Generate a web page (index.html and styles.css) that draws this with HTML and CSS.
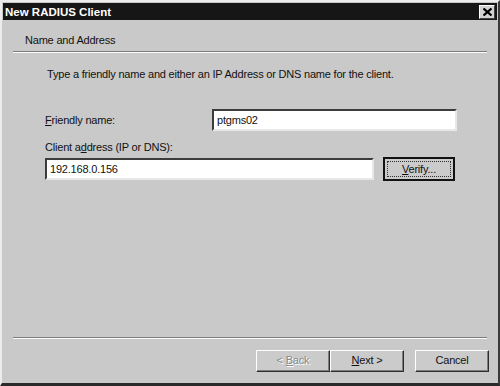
FILE: index.html
```html
<!DOCTYPE html>
<html lang="en">
<head>
  <meta charset="UTF-8">
  <title>New RADIUS Client</title>
  <link rel="stylesheet" href="styles.css">
</head>
<body>
  <div class="window">
    <div class="titlebar">
      <span class="title">New RADIUS Client</span>
      <span class="close">
        <svg width="9" height="8" viewBox="0 0 9 8">
          <path d="M0.5 0.5 L8.5 7.5 M8.5 0.5 L0.5 7.5" stroke="#000" stroke-width="2.2"/>
        </svg>
      </span>
    </div>
    <div class="header">Name and Address</div>
    <div class="sep"></div>

    <div class="content">
      <p class="intro">Type a friendly name and either an IP Address or DNS name for the client.</p>
      <div class="row">
        <label class="label"><u>F</u>riendly name:</label>
        <div class="field wide">ptgms02</div>
      </div>
      <label class="label block">Client a<u>d</u>dress (IP or DNS):</label>
      <div class="row tight">
        <div class="field addr">192.168.0.156</div>
        <div class="btn default"><span class="focus"><u>V</u>erify...</span></div>
      </div>
    </div>

    <div class="sep"></div>
    <div class="footer">
      <div class="btn disabled">&lt; <u>B</u>ack</div>
      <div class="btn"><u>N</u>ext &gt;</div>
      <div class="btn cancel">Cancel</div>
    </div>
  </div>
</body>
</html>
```

FILE: styles.css
```css
/*
 *  Classic dialog look.
 */
html, body{
  margin: 0;
  padding: 0;
  background: #c9c9c9;
}
body{
  font-family: "Liberation Sans", Arial, sans-serif;
  font-size: 11px;
  letter-spacing: -0.2px;
  color: #111;
}
.window{
  box-sizing: border-box;
  width: 500px;
  height: 386px;
  padding: 1px;
  border-style: solid;
  border-width: 2px 2px 3px 2px;
  border-color: #ececec #3a3a3a #2a2a2a #ececec;
  background: #c9c9c9;
  display: flex;
  flex-direction: column;
}
.titlebar{
  height: 17px;
  background: #161616;
  display: flex;
  align-items: center;
  justify-content: space-between;
}
.title{
  color: #fff;
  font-weight: bold;
  font-size: 11.5px;
  letter-spacing: 0;
  padding-left: 2px;
}
.close{
  box-sizing: border-box;
  width: 16px;
  height: 14px;
  margin-right: 2px;
  background: #d2d2d2;
  border: 1px solid;
  border-color: #fff #404040 #404040 #fff;
  display: flex;
  align-items: center;
  justify-content: center;
}

/*
 *  Sections.
 */
.header{
  padding: 14px 0 4px 22px;
  line-height: 13px;
}
.sep{
  margin: 0 10px;
  border-top: 1px solid #7c7c7c;
  border-bottom: 1px solid #fbfbfb;
}
.content{
  flex: 1;
  padding-left: 42px;
}
.intro{
  margin: 15px 0 0 2px;
  line-height: 13px;
}
.row{
  display: flex;
  align-items: center;
  margin-top: 28px;
}
.row.tight{
  margin-top: 3px;
}
.label{
  width: 167px;
  line-height: 13px;
}
.label.block{
  display: block;
  width: auto;
  margin-top: 10px;
}
.field{
  box-sizing: border-box;
  height: 22px;
  line-height: 18px;
  padding-left: 3px;
  background: #fff;
  border: 2px solid;
  border-color: #3c3c3c #e8e8e8 #e8e8e8 #3c3c3c;
}
.field.wide{
  width: 245px;
}
.field.addr{
  width: 329px;
  margin-right: 9px;
}

/*
 *  Buttons.
 */
.btn{
  box-sizing: border-box;
  width: 74px;
  height: 22px;
  line-height: 18px;
  text-align: center;
  background: #cbcbcb;
  border: 1px solid;
  border-color: #fff #2e2e2e #2e2e2e #fff;
  box-shadow: inset -1px -1px 0 #7e7e7e;
}
.btn.default{
  width: 72px;
  height: 24px;
  border: 2px solid #111;
  box-shadow: none;
  padding: 2px;
}
.btn.default .focus{
  display: block;
  height: 16px;
  line-height: 14px;
  border: 1px dotted #333;
  box-sizing: border-box;
}
.btn.disabled{
  color: #8a8a8a;
  text-shadow: 1px 1px 0 #fff;
}
.footer{
  display: flex;
  justify-content: flex-end;
  padding: 11px 8px 0 0;
  height: 32px;
}
.footer .btn.cancel{
  margin-left: 11px;
}
```
